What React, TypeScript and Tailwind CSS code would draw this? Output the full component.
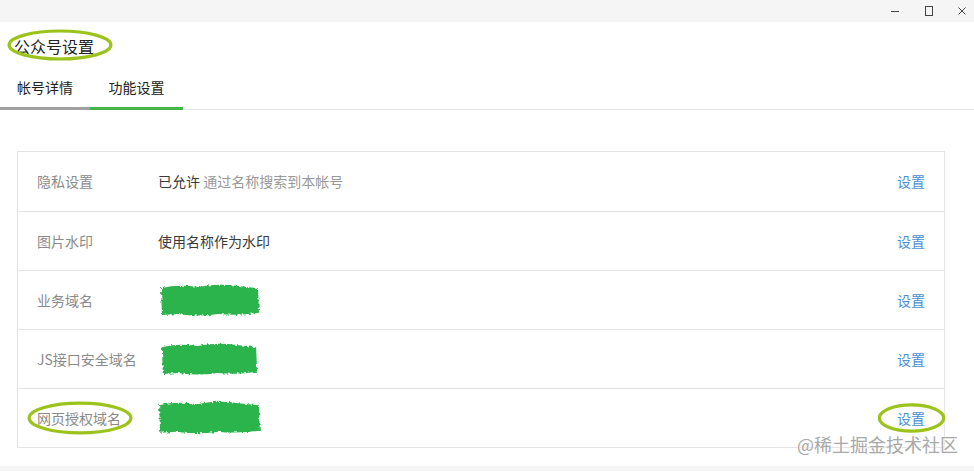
import React from "react";

const CJK = { fontFamily: '"Noto Sans CJK SC", "Noto Sans", sans-serif' };

function Ellipse({ className }: { className: string }) {
  return (
    <svg className={`pointer-events-none absolute ${className}`} viewBox="0 0 100 40" preserveAspectRatio="none">
      <ellipse cx="50" cy="20" rx="48" ry="17.5" fill="none" stroke="#9cc31c" strokeWidth="3.2" vectorEffect="non-scaling-stroke" />
    </svg>
  );
}

function Scribble({ id, className }: { id: string; className: string }) {
  return (
    <svg className={className} viewBox="0 0 104 34" preserveAspectRatio="none">
      <defs>
        <filter id={id} x="-10%" y="-20%" width="120%" height="140%">
          <feTurbulence type="fractalNoise" baseFrequency="0.35" numOctaves="2" seed={id.length * 7} />
          <feDisplacementMap in="SourceGraphic" scale="4" />
        </filter>
      </defs>
      <path
        d="M3 5 Q20 1 40 4 Q60 0 80 3 L100 5 L101 29 Q80 32 60 30 Q40 33 20 30 L4 31 Z"
        fill="#2cb44c"
        filter={`url(#${id})`}
      />
    </svg>
  );
}

function Row({ label, children, first, circled }: { label: string; children: React.ReactNode; first?: boolean; circled?: boolean }) {
  return (
    <div className={`flex h-[59px] items-center pl-[19px] pr-[19px] ${first ? "" : "border-t border-[#e4e4e4]"}`}>
      <div className="relative w-[121px] text-[14px] text-[#8a8a8a]">
        {label}
        {circled && <Ellipse className="-left-[10px] -top-[7px] h-[34px] w-[106px]" />}
      </div>
      <div className="flex-1 text-[14px] text-[#3a3a3a]">{children}</div>
      <a className="relative text-[14px] text-[#4a8fd6]">
        设置
        {circled && <Ellipse className="-left-[19px] -top-[5px] h-[30px] w-[67px]" />}
      </a>
    </div>
  );
}

export default function App() {
  return (
    <div className="relative flex h-[471px] w-[974px] flex-col overflow-hidden bg-white" style={CJK}>
      {/* title bar */}
      <div className="flex h-[22px] items-center justify-end bg-[#f5f5f5] pr-[7px]">
        <svg className="mr-[24px] h-[10px] w-[10px]" viewBox="0 0 10 10">
          <path d="M1 5.5h8" stroke="#444" strokeWidth="1" />
        </svg>
        <svg className="mr-[23px] h-[10px] w-[10px]" viewBox="0 0 10 10">
          <rect x="1.5" y="0.5" width="7" height="9" fill="none" stroke="#444" strokeWidth="1" />
        </svg>
        <svg className="h-[10px] w-[10px]" viewBox="0 0 10 10">
          <path d="M1.5 1.5l7 7M8.5 1.5l-7 7" stroke="#444" strokeWidth="1" />
        </svg>
      </div>

      {/* header */}
      <div className="flex h-[47px] items-center px-[14px]">
        <span className="relative text-[16px] text-[#222]">
          公众号设置
          <Ellipse className="-left-[7px] -top-[5px] h-[32px] w-[106px]" />
        </span>
      </div>

      {/* tabs */}
      <div className="flex border-b border-[#e7e7e7]">
        <div className="-mb-px flex h-[41px] w-[90px] items-center justify-center border-b-[3px] border-[#a0a0a0] pb-[2px] text-[14px] text-[#222]">
          帐号详情
        </div>
        <div className="-mb-px flex h-[41px] w-[93px] items-center justify-center border-b-[3px] border-[#44b549] pb-[2px] text-[14px] text-[#222]">
          功能设置
        </div>
      </div>

      {/* settings table */}
      <div className="ml-[17px] mr-[29px] mt-[41px] border border-[#e4e4e4]">
        <Row label="隐私设置" first>
          已允许 <span className="text-[#999]">通过名称搜索到本帐号</span>
        </Row>
        <Row label="图片水印">使用名称作为水印</Row>
        <Row label="业务域名">
          <Scribble id="s-a" className="block h-[35px] w-[104px]" />
        </Row>
        <Row label="JS接口安全域名">
          <Scribble id="s-bb" className="ml-[1px] block h-[35px] w-[101px]" />
        </Row>
        <Row label="网页授权域名" circled>
          <Scribble id="s-ccc" className="-ml-[2px] block h-[36px] w-[107px]" />
        </Row>
      </div>

      <div className="mt-[18px] flex-1 bg-[#f5f5f5]" />

      {/* watermark */}
      <div
        className="absolute left-[797px] top-[431px] text-[18px] leading-[26px] text-[#a8a8a8]"
        style={{ textShadow: "0 0 2px #fff, 0 0 2px #fff" }}
      >
        @稀土掘金技术社区
      </div>
    </div>
  );
}
